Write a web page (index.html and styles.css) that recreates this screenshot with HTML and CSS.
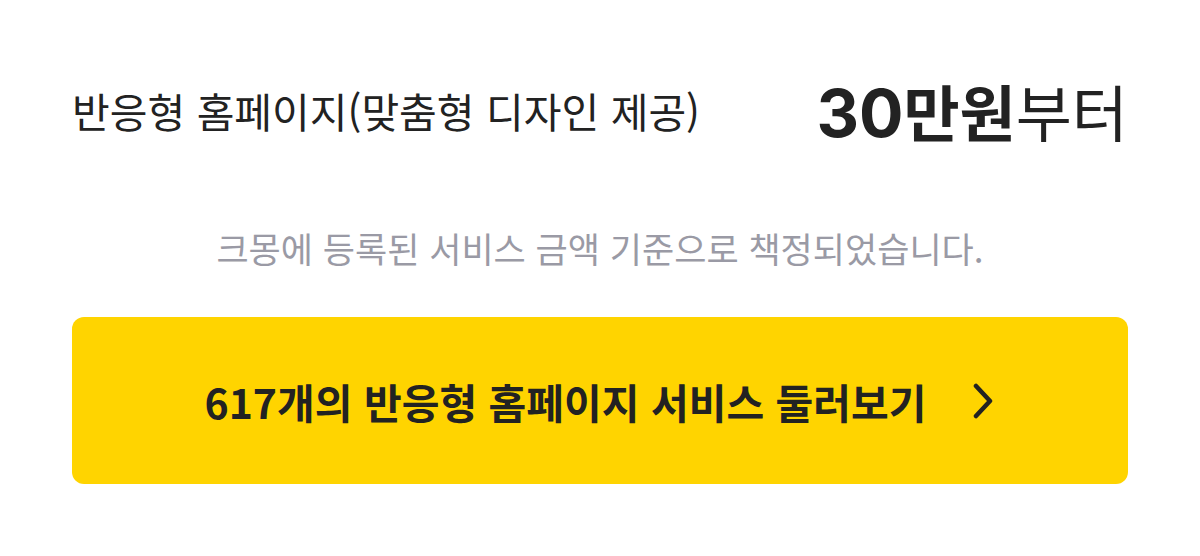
FILE: index.html
```html
<!DOCTYPE html>
<html lang="ko">
<head>
  <meta charset="UTF-8">
  <title>반응형 홈페이지</title>
  <link rel="stylesheet" href="styles.css">
</head>
<body>
  <div class="price-box">
    <div class="price-head">
      <h2 class="service-name">반응형 홈페이지(맞춤형 디자인 제공)</h2>
      <p class="price"><strong><span class="num">30</span>만원</strong>부터</p>
    </div>
    <p class="price-note">크몽에 등록된 서비스 금액 기준으로 책정되었습니다.</p>
    <a class="browse-btn" href="#">
      <span>617개의 반응형 홈페이지 서비스 둘러보기</span>
      <svg class="chevron" width="24" height="36" viewBox="0 0 24 36">
        <path d="M4 3 L18 18 L4 33" fill="none" stroke="#222" stroke-width="4.5" stroke-linecap="round" stroke-linejoin="round"/>
      </svg>
    </a>
  </div>
</body>
</html>
```

FILE: styles.css
```css
body { margin: 0; background: #fff; font-family: "Noto Sans CJK KR", "Noto Sans", sans-serif; color: #222; }
.price-box { padding: 70px 72px 0; }
.price-head { display: flex; justify-content: space-between; align-items: center; height: 80px; }
.service-name { margin: 0; font-size: 41px; font-weight: 400; }
.price { margin: 0; font-size: 61px; font-weight: 400; }
.price strong { font-weight: 700; }
.price .num { font-family: Inter, sans-serif; font-size: 66px; font-weight: 700; }
.price-note { margin: 72px 0 0; text-align: center; font-size: 35px; color: #9a9aa5; }
.browse-btn {
  margin-top: 44px; display: flex; justify-content: center; align-items: center; gap: 45px;
  height: 167px; background: #ffd400; border-radius: 12px;
  color: #222; text-decoration: none; font-size: 41px; font-weight: 700;
}
.chevron { display: block; }
```
